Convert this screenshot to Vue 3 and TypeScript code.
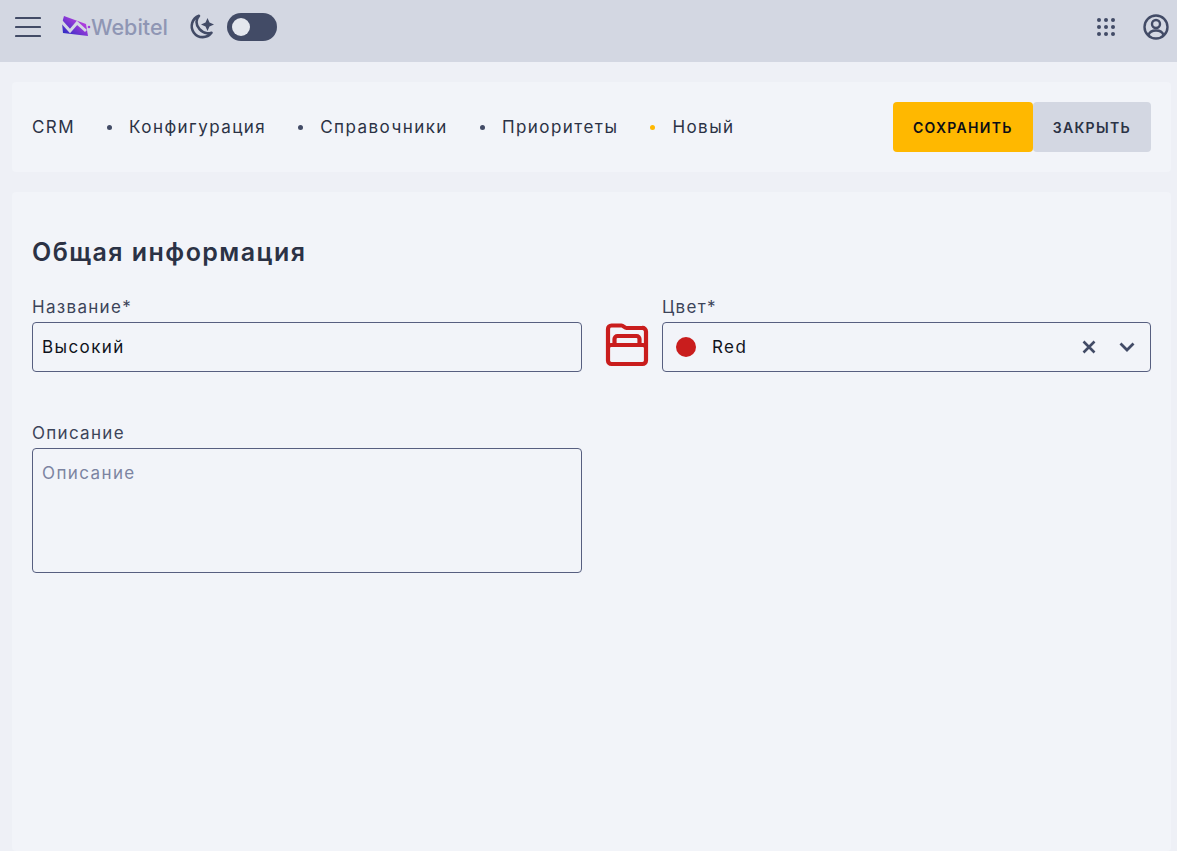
<script setup lang="ts">
const crumbs = ['Конфигурация', 'Справочники', 'Приоритеты'];
</script>

<template>
    <div class="page">
        <header class="topbar">
            <div class="topbar-left">
                <svg class="burger" width="26" height="22" viewBox="0 0 26 22">
                    <path d="M1 2h24M1 11h24M1 20h24" stroke="#424b66" stroke-width="2.200" stroke-linecap="round" />
                </svg>
                <div class="logo">
                    <svg width="30" height="22" viewBox="0 0 30 22">
                        <defs>
                            <linearGradient id="logo-grad" x1="0" y1="1" x2="1" y2="0">
                                <stop offset="0.1" stop-color="#2f2cc4" />
                                <stop offset="0.8" stop-color="#c03fe0" />
                            </linearGradient>
                        </defs>
                        <path d="M3 0l22 8 2 12-25-3-1-10z" fill="url(#logo-grad)" />
                        <path d="M0 5l9 10 7-8 9 8" fill="none" stroke="#d3d7e2" stroke-width="3" />
                        <circle cx="28" cy="11" r="1.300" fill="#a03be0" />
                    </svg>
                    <span class="logo-text">Webitel</span>
                </div>
                <svg class="moon" width="26" height="26" viewBox="0 0 26 26" fill="none">
                    <path
                        d="M10 1.800a11 11 0 1 0 12.500 17c-1.500.5-3 .7-4.500.5C12 18.500 7.500 13 7.500 8c0-2.300.8-4.500 2.500-6.200z"
                        stroke="#424b66"
                        stroke-width="2.600"
                        stroke-linejoin="round"
                    />
                    <path d="M18.500 4l2 4.500 4.500 2-4.500 2-2 4.500-2-4.500-4.500-2 4.500-2z" fill="#424b66" />
                </svg>
                <div class="toggle"><span class="toggle-knob" /></div>
            </div>
            <div class="topbar-right">
                <svg width="20" height="20" viewBox="0 0 20 20" fill="#424b66">
                    <template v-for="y in [3, 10, 17]" :key="y">
                        <circle v-for="x in [3, 10, 17]" :key="x" :cx="x" :cy="y" r="2" />
                    </template>
                </svg>
                <svg width="26" height="26" viewBox="0 0 26 26" fill="none" stroke="#424b66" stroke-width="2.400">
                    <circle cx="13" cy="13" r="11.500" />
                    <circle cx="13" cy="10" r="4" />
                    <path d="M5.500 21c1-3 4-4.500 7.500-4.500s6.500 1.500 7.500 4.500" />
                </svg>
            </div>
        </header>

        <main class="content">
            <section class="card crumbs-card">
                <nav class="crumbs">
                    <span>CRM</span>
                    <template v-for="c in crumbs" :key="c">
                        <i class="dot" />
                        <span>{{ c }}</span>
                    </template>
                    <i class="dot dot-active" />
                    <span>Новый</span>
                </nav>
                <div class="actions">
                    <button class="btn btn-primary">СОХРАНИТЬ</button>
                    <button class="btn btn-secondary">ЗАКРЫТЬ</button>
                </div>
            </section>

            <section class="card form-card">
                <h2 class="title">Общая информация</h2>
                <div class="form-grid">
                    <div class="field">
                        <label>Название*</label>
                        <div class="input">Высокий</div>
                    </div>
                    <div class="icon-cell">
                        <svg width="44" height="44" viewBox="0 0 44 44" fill="none" stroke="#c91d1d" stroke-width="4.200">
                            <path
                                d="M3 12V6a3.500 3.500 0 0 1 3.500-3.500h10c2 0 3 2.500 5 2.500h15.500A3.500 3.500 0 0 1 41 8.500v29a3.500 3.500 0 0 1-3.500 3.500h-31A3.500 3.500 0 0 1 3 37.500z"
                                stroke-linejoin="round"
                            />
                            <path d="M9.500 22v-6a3 3 0 0 1 3-3h19a3 3 0 0 1 3 3v6M3 25a3 3 0 0 1 3-3h32a3 3 0 0 1 3 3" />
                        </svg>
                    </div>
                    <div class="field">
                        <label>Цвет*</label>
                        <div class="input select">
                            <span class="swatch" />
                            <span class="select-value">Red</span>
                            <svg class="clear" width="16" height="16" viewBox="0 0 16 16">
                                <path d="M2.500 2.500l11 11M13.500 2.500l-11 11" stroke="#424b66" stroke-width="2.600" />
                            </svg>
                            <svg width="18" height="12" viewBox="0 0 18 12" fill="none">
                                <path d="M2.500 2.500L9 9l6.500-6.500" stroke="#424b66" stroke-width="2.800" />
                            </svg>
                        </div>
                    </div>
                    <div class="field field-desc">
                        <label>Описание</label>
                        <div class="textarea">Описание</div>
                    </div>
                </div>
            </section>
        </main>
    </div>
</template>

<style>
html,
body {
    margin: 0;
    background: #eef0f6;
}
</style>

<style scoped>
.page {
    height: 851px;
    overflow: hidden;
    display: flex;
    flex-direction: column;
    font-family: Inter, "Noto Sans", sans-serif;
    color: #2b3245;
    background: #eef0f6;
}

.topbar {
    flex: 0 0 62px;
    box-sizing: border-box;
    padding: 0 8px 8px 15px;
    display: flex;
    align-items: center;
    justify-content: space-between;
    background: #d3d7e2;
}

.topbar-left {
    display: flex;
    align-items: center;
}

.topbar-right {
    display: flex;
    align-items: center;
    gap: 27px;
}

.logo {
    display: flex;
    align-items: center;
    margin-left: 20px;
}

.logo-text {
    font-size: 21.500px;
    font-weight: 500;
    color: #8f96b4;
}

.moon {
    margin-left: 21px;
}

.toggle {
    width: 50px;
    height: 28px;
    margin-left: 12px;
    border-radius: 14px;
    background: #424b66;
    display: flex;
    align-items: center;
    padding-left: 5px;
    box-sizing: border-box;
}

.toggle-knob {
    width: 18px;
    height: 18px;
    border-radius: 50%;
    background: #e4e7ee;
}

.content {
    flex: 1;
    padding: 20px 6px 0 12px;
    display: flex;
    flex-direction: column;
    gap: 20px;
    min-height: 0;
}

.card {
    background: #f2f4f9;
    border-radius: 4px;
}

.crumbs-card {
    height: 90px;
    box-sizing: border-box;
    padding: 0 20px;
    display: flex;
    align-items: center;
    justify-content: space-between;
}

.crumbs {
    display: flex;
    align-items: center;
    font-size: 17px;
    letter-spacing: 1.450px;
    color: #2b3245;
}

.dot {
    width: 5px;
    height: 5px;
    margin: 0 17px 0 32px;
    border-radius: 50%;
    background: #424b66;
}

.dot-active {
    background: #ffb800;
}

.actions {
    display: flex;
}

.btn {
    height: 50px;
    border: 0;
    padding: 0 20px;
    border-radius: 4px;
    font-family: inherit;
    font-size: 14px;
    font-weight: 600;
    letter-spacing: 1.300px;
}

.btn-primary {
    background: #ffb800;
    color: #0c0e16;
}

.btn-secondary {
    background: #d3d7e2;
    color: #2b3245;
}

.form-card {
    flex: 1;
    padding: 40px 20px 0;
}

.title {
    margin: 0;
    font-size: 25px;
    line-height: 41px;
    font-weight: 600;
    letter-spacing: 1.450px;
    color: #2b3245;
}

.form-grid {
    margin-top: 22px;
    display: grid;
    grid-template-columns: 550px 80px 489px;
    row-gap: 49px;
    align-items: start;
}

.field label {
    display: block;
    margin-bottom: 3px;
    font-size: 17px;
    line-height: 24px;
    letter-spacing: 1.300px;
    color: #3c4459;
}

.input,
.textarea {
    box-sizing: border-box;
    border: 1px solid #575f80;
    border-radius: 4px;
    padding: 0 9px;
    font-size: 17px;
    letter-spacing: 1.400px;
    color: #10131c;
}

.input {
    height: 50px;
    line-height: 48px;
}

.select {
    display: flex;
    align-items: center;
    padding: 0 14px 0 13px;
}

.swatch {
    width: 20px;
    height: 20px;
    border-radius: 50%;
    background: #c91d1d;
}

.select-value {
    flex: 1;
    margin-left: 16px;
}

.clear {
    margin-right: 21px;
}

.icon-cell {
    padding: 28px 0 0 10px;
    display: flex;
    justify-content: center;
}

.field-desc {
    grid-column: 1;
}

.textarea {
    height: 125px;
    padding-top: 12px;
    line-height: 24px;
    color: #7c84a1;
}
</style>
